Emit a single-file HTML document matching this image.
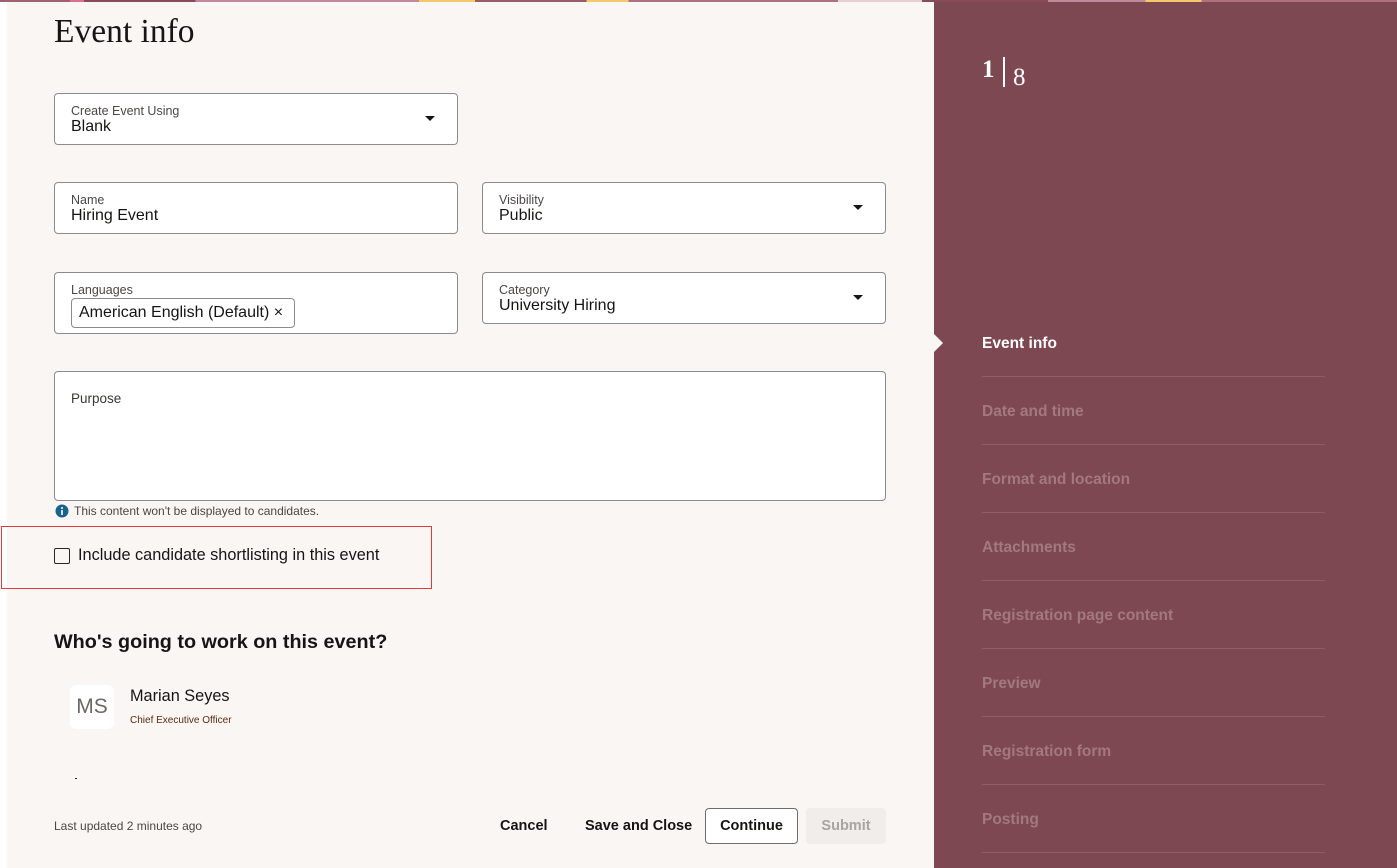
<!DOCTYPE html>
<html><head><meta charset="utf-8"><style>
*{box-sizing:border-box;margin:0;padding:0}
body{width:1397px;height:868px;overflow:hidden;background:#fff;font-family:"Liberation Sans",sans-serif;color:#161513;position:relative}
.left{position:absolute;left:7px;top:0;width:927px;height:868px;background:#faf6f4}
.right{position:absolute;left:934px;top:0;width:463px;height:868px;background:#7d4852}
.strip{position:absolute;left:0;top:0;width:1397px;height:2px;background:linear-gradient(90deg,#a06070 0 5%,#d87090 5% 6%,#8a4a5a 6% 14%,#c08a9a 14% 30%,#f5c86a 30% 34%,#9a5a6a 34% 42%,#f5c86a 42% 45%,#b07080 45% 60%,#e8d0d0 60% 66%,#8a4a5a 66% 75%,#c08a9a 75% 82%,#f5c86a 82% 86%,#b07080 86% 100%)}
h1{position:absolute;left:54px;top:13px;font-family:"Liberation Serif",serif;font-weight:normal;font-size:33.5px;color:#161513}
.f{position:absolute;background:#fff;border:1px solid #8d8a87;border-radius:4px}
.lab{position:absolute;left:16px;top:10px;font-size:12.5px;color:#4a4745}
.val{position:absolute;left:16px;top:24px;font-size:16px;color:#161513}
.caret{position:absolute;right:22px;top:22px;width:0;height:0;border-left:5px solid transparent;border-right:5px solid transparent;border-top:5px solid #161513}
.nav{position:absolute;left:982px;width:343px;font-size:15.5px;font-weight:bold;color:#a3787f}
.line{position:absolute;left:982px;width:343px;height:1px;background:#8f5d66}
</style></head><body>
<div class="left"></div>
<div class="right"></div>
<div class="strip"></div>
<h1>Event info</h1>

<div class="f" style="left:54px;top:93px;width:404px;height:52px"><div class="lab">Create Event Using</div><div class="val">Blank</div><div class="caret" style="top:22px"></div></div>
<div class="f" style="left:54px;top:182px;width:404px;height:52px"><div class="lab">Name</div><div class="val">Hiring Event</div></div>
<div class="f" style="left:482px;top:182px;width:404px;height:52px"><div class="lab">Visibility</div><div class="val">Public</div><div class="caret"></div></div>
<div class="f" style="left:54px;top:272px;width:404px;height:62px"><div class="lab">Languages</div>
<div style="position:absolute;left:16px;top:25px;width:224px;height:30px;border:1px solid #8d8a87;border-radius:4px;font-size:16px;padding:5px 0 0 7px">American English (Default) ×</div></div>
<div class="f" style="left:482px;top:272px;width:404px;height:52px"><div class="lab">Category</div><div class="val">University Hiring</div><div class="caret"></div></div>
<div class="f" style="left:54px;top:371px;width:832px;height:130px"><div class="lab" style="top:19px;font-size:13.5px;color:#3a3735">Purpose</div></div>

<svg style="position:absolute;left:55px;top:504px" width="14" height="14"><circle cx="7" cy="7" r="6.5" fill="#19648a"/><rect x="6.2" y="6" width="1.6" height="5" fill="#fff"/><circle cx="7" cy="4" r="1" fill="#fff"/></svg>
<div style="position:absolute;left:74px;top:504px;font-size:12px;color:#4a4745">This content won't be displayed to candidates.</div>

<div style="position:absolute;left:1px;top:526px;width:431px;height:63px;border:1.5px solid #e03a3a"></div>
<div style="position:absolute;left:54px;top:548px;width:16px;height:16px;border:1.5px solid #2a2725;border-radius:2px"></div>
<div style="position:absolute;left:78px;top:546px;font-size:16.3px">Include candidate shortlisting in this event</div>

<div style="position:absolute;left:54px;top:631px;font-size:19.8px;font-weight:bold">Who's going to work on this event?</div>
<div style="position:absolute;left:70px;top:685px;width:44px;height:44px;background:#fff;border-radius:6px;font-size:21px;color:#6b6866;text-align:center;line-height:44px">MS</div>
<div style="position:absolute;left:130px;top:687px;font-size:16.3px">Marian Seyes</div>
<div style="position:absolute;left:130px;top:715px;font-size:10px;color:#5a2a14">Chief Executive Officer</div>
<div style="position:absolute;left:75px;top:778px;width:2px;height:1px;background:#222"></div>

<div style="position:absolute;left:54px;top:819px;font-size:12px;color:#4a4745">Last updated 2 minutes ago</div>
<div style="position:absolute;left:500px;top:818px;font-size:14.5px;font-weight:bold">Cancel</div>
<div style="position:absolute;left:585px;top:818px;font-size:14.5px;font-weight:bold">Save and Close</div>
<div style="position:absolute;left:705px;top:808px;width:93px;height:36px;border:1px solid #6f6c6a;border-radius:4px;background:#fff;font-size:14.5px;font-weight:bold;text-align:center;line-height:34px">Continue</div>
<div style="position:absolute;left:806px;top:808px;width:80px;height:36px;border-radius:4px;background:#f1edeb;color:#a8a4a2;font-size:14.5px;font-weight:bold;text-align:center;line-height:36px">Submit</div>

<div style="position:absolute;left:982px;top:56px;font-family:'Liberation Serif',serif;font-size:25px;font-weight:bold;color:#fff">1</div>
<div style="position:absolute;left:1003px;top:57px;width:2px;height:30px;background:#fff"></div>
<div style="position:absolute;left:1013px;top:64px;font-family:'Liberation Serif',serif;font-size:25px;color:#fff">8</div>

<div style="position:absolute;left:934px;top:334px;width:0;height:0;border-top:9px solid transparent;border-bottom:9px solid transparent;border-left:9px solid #faf6f4"></div>
<div class="nav" style="top:335px;color:#fff">Event info</div>
<div class="line" style="top:376px"></div>
<div class="nav" style="top:403px">Date and time</div>
<div class="line" style="top:444px"></div>
<div class="nav" style="top:471px">Format and location</div>
<div class="line" style="top:512px"></div>
<div class="nav" style="top:539px">Attachments</div>
<div class="line" style="top:580px"></div>
<div class="nav" style="top:607px">Registration page content</div>
<div class="line" style="top:648px"></div>
<div class="nav" style="top:675px">Preview</div>
<div class="line" style="top:716px"></div>
<div class="nav" style="top:743px">Registration form</div>
<div class="line" style="top:784px"></div>
<div class="nav" style="top:811px">Posting</div>
<div class="line" style="top:852px"></div>
</body></html>
